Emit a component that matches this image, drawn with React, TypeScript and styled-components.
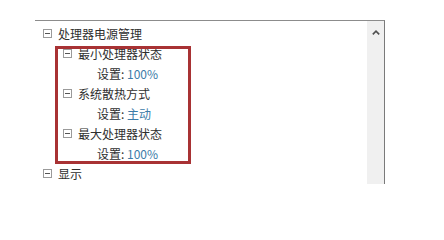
import React from "react";
import styled, { createGlobalStyle } from "styled-components";

const GlobalStyle = createGlobalStyle`
  html, body {
    margin: 0;
    padding: 0;
    background: #ffffff;
  }
  body {
    font-family: "Noto Sans CJK SC", "Noto Sans", sans-serif;
    font-size: 12px;
    color: #2e2e2e;
  }
`;

type Setting = { value: string };

type Node = {
  label: string;
  setting?: Setting;
};

const processorNodes: Node[] = [
  { label: "最小处理器状态", setting: { value: "100%" } },
  { label: "系统散热方式", setting: { value: "主动" } },
  { label: "最大处理器状态", setting: { value: "100%" } },
];

const MinusBox: React.FC = () => (
  <Toggle>
    <svg width="9" height="9" viewBox="0 0 9 9">
      <rect x="0.5" y="0.5" width="8" height="8" fill="#fff" stroke="#9a9a9a" />
      <line x1="2" y1="4.5" x2="7" y2="4.5" stroke="#555" />
    </svg>
  </Toggle>
);

export default function App() {
  return (
    <>
      <GlobalStyle />
      <Panel>
        <Tree>
          <Row>
            <MinusBox />
            <Label>处理器电源管理</Label>
          </Row>
          <Group>
            {processorNodes.map((node) => (
              <React.Fragment key={node.label}>
                <Row>
                  <MinusBox />
                  <Label>{node.label}</Label>
                </Row>
                {node.setting && (
                  <SettingRow>
                    <Label>设置: </Label>
                    <Value>{node.setting.value}</Value>
                  </SettingRow>
                )}
              </React.Fragment>
            ))}
          </Group>
          <Row>
            <MinusBox />
            <Label>显示</Label>
          </Row>
        </Tree>
        <Scrollbar>
          <ArrowUp>
            <svg width="8" height="5" viewBox="0 0 8 5">
              <path d="M0.8 4.4 L4 1.2 L7.2 4.4" fill="none" stroke="#505050" strokeWidth="1.6" />
            </svg>
          </ArrowUp>
        </Scrollbar>
      </Panel>
    </>
  );
}

const Panel = styled.div`
  display: flex;
  margin: 20px 0 0 35px;
  width: 349px;
  height: 163px;
  border-top: 1px solid #8c8c8c;
  border-right: 1px solid #7a7a7a;
  background: linear-gradient(to right, rgba(255, 255, 255, 0.6), transparent 30px);
`;

const Tree = styled.div`
  flex: 1;
  padding: 2px 0 0 8px;
`;

const Row = styled.div`
  display: flex;
  align-items: center;
  height: 20px;
  gap: 6px;
  white-space: nowrap;
`;

const Toggle = styled.span`
  display: flex;
  width: 9px;
  height: 9px;
`;

const Label = styled.span`
  white-space: pre;
`;

const Value = styled.span`
  color: #3b7ba8;
`;

const Group = styled.div`
  position: relative;
  padding-left: 20px;

  &::after {
    content: "";
    position: absolute;
    left: 12px;
    top: 3px;
    width: 130px;
    bottom: -1px;
    border: 3px solid #a83234;
    pointer-events: none;
  }
`;

const SettingRow = styled(Row)`
  gap: 0;
  padding-left: 34px;
`;

const Scrollbar = styled.div`
  width: 17px;
  background: #f0f0f0;
  display: flex;
  flex-direction: column;
  align-items: center;
`;

const ArrowUp = styled.div`
  display: flex;
  padding-top: 9px;
`;
